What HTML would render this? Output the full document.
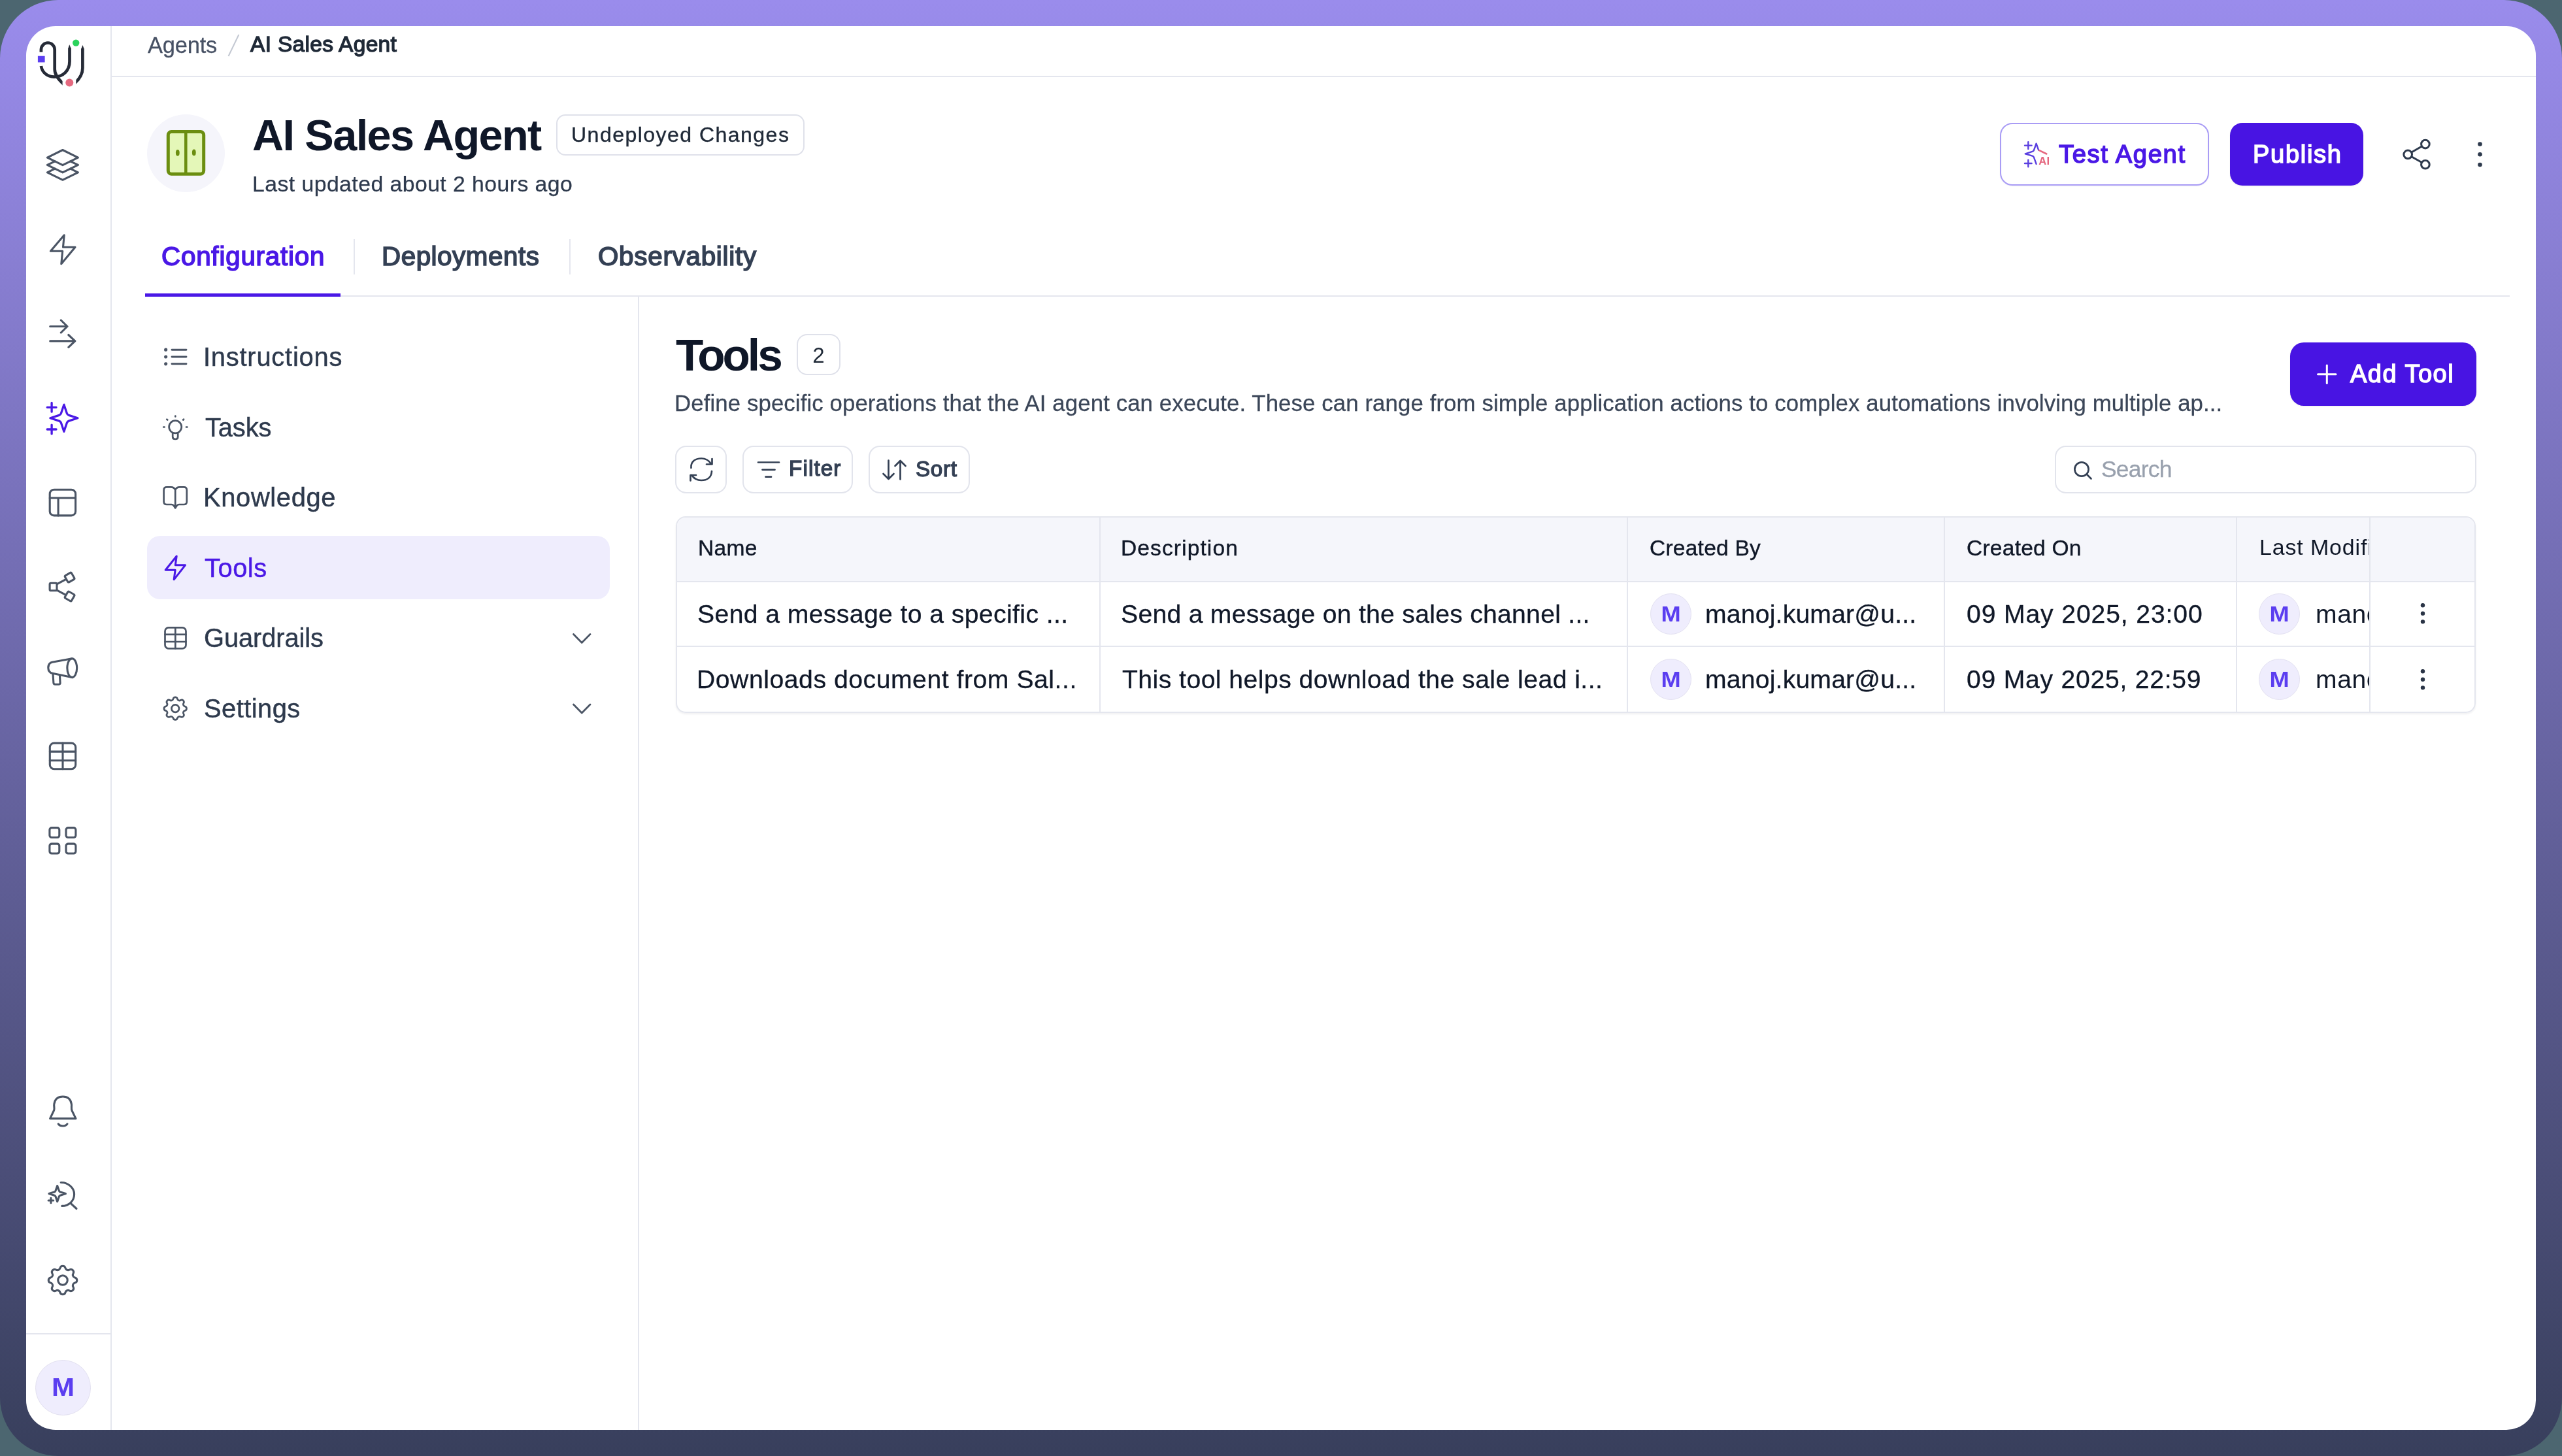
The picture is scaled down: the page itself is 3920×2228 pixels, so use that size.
<!DOCTYPE html>
<html><head><meta charset="utf-8">
<style>
*{box-sizing:border-box;margin:0;padding:0}
html,body{width:3920px;height:2228px;overflow:hidden;background:#4c6670;font-family:'Liberation Sans',sans-serif;-webkit-font-smoothing:antialiased}
.abs{position:absolute}
.t{position:absolute;white-space:nowrap;line-height:1;will-change:transform}
</style></head><body>
<div class="abs" style="left:0;top:0;width:3920px;height:2228px;border-radius:89px;background:linear-gradient(180deg,#9a8cec 0%,#383f5c 100%)"></div>
<div class="abs" style="left:40px;top:40px;width:3840px;height:2148px;border-radius:45px;background:#fff"></div>

<div class="abs" style="left:168.5px;top:40px;width:2px;height:2148px;background:#e4e6ee"></div>
<div class="abs" style="left:40px;top:2040px;width:129px;height:2px;background:#e4e6ee"></div>
<div class="abs" style="left:53.5px;top:2080.5px;width:85px;height:85px;border-radius:50%;background:#efedfd;border:1.5px solid #e2e0f0"></div>
<div class="abs" style="left:170px;top:115.5px;width:3710px;height:2px;background:#e4e6ee"></div>
<svg class="abs" style="left:340px;top:48px" width="40" height="44"><path d="M25.4,5 L9.5,38" stroke="#c3c8d2" stroke-width="2"/></svg>
<div class="abs" style="left:225px;top:174.5px;width:119px;height:119px;border-radius:50%;background:#f5f5fb"></div>
<div class="abs" style="left:851px;top:175px;width:380px;height:63px;border:2px solid #dfe1ea;border-radius:14px"></div>
<div class="abs" style="left:3060px;top:188px;width:320px;height:96px;border:2.5px solid #a99cf5;border-radius:19px;box-shadow:0 1px 2px rgba(16,24,40,.05)"></div>
<div class="abs" style="left:3412px;top:188px;width:204px;height:96px;background:#4814e3;border-radius:19px;box-shadow:0 1px 2px rgba(16,24,40,.08)"></div>
<div class="abs" style="left:541px;top:366px;width:2px;height:54px;background:#e4e6ee"></div>
<div class="abs" style="left:871px;top:366px;width:2px;height:54px;background:#e4e6ee"></div>
<div class="abs" style="left:222px;top:452px;width:3618px;height:2px;background:#e4e6ee"></div>
<div class="abs" style="left:222px;top:449px;width:299px;height:5px;background:#4a18e6"></div>
<div class="abs" style="left:976px;top:454px;width:2px;height:1734px;background:#e4e6ee"></div>
<div class="abs" style="left:224.5px;top:820px;width:708.5px;height:96.6px;background:#efedfd;border-radius:20px"></div>
<div class="abs" style="left:1219px;top:511px;width:67px;height:63px;border:2px solid #dfe1ea;border-radius:16px"></div>
<div class="abs" style="left:3504px;top:524px;width:284.5px;height:97px;background:#4814e3;border-radius:21px;box-shadow:0 1px 2px rgba(16,24,40,.08)"></div>
<div class="abs" style="left:1033px;top:682px;width:79px;height:73px;border:2px solid #e2e4ec;border-radius:17px"></div>
<div class="abs" style="left:1136px;top:682px;width:169px;height:73px;border:2px solid #e2e4ec;border-radius:17px"></div>
<div class="abs" style="left:1329px;top:682px;width:155px;height:73px;border:2px solid #e2e4ec;border-radius:17px"></div>
<div class="abs" style="left:3144px;top:682px;width:644.5px;height:73px;border:2px solid #e2e4ec;border-radius:17px"></div>
<div class="abs" style="left:1034px;top:789.5px;width:2754px;height:301px;border:2px solid #e4e6ee;border-radius:15px;overflow:hidden;box-shadow:0 2px 3px rgba(16,24,40,.06)">
<div class="abs" style="left:0;top:0;width:2750px;height:97.5px;background:#f5f6fb"></div>
<div class="abs" style="left:0;top:97px;width:2750px;height:2px;background:#e4e6ee"></div>
<div class="abs" style="left:0;top:196.5px;width:2750px;height:2px;background:#e4e6ee"></div>
<div class="abs" style="left:645.5px;top:0;width:2px;height:301px;background:#e4e6ee"></div>
<div class="abs" style="left:1453.0px;top:0;width:2px;height:301px;background:#e4e6ee"></div>
<div class="abs" style="left:1938.0px;top:0;width:2px;height:301px;background:#e4e6ee"></div>
<div class="abs" style="left:2384.5px;top:0;width:2px;height:301px;background:#e4e6ee"></div>
<div class="abs" style="left:2588.5px;top:0;width:2px;height:301px;background:#e4e6ee"></div>
</div>
<div class="abs" style="left:2525.0px;top:908.0px;width:63px;height:63px;border-radius:50%;background:#efedfd;border:1.5px solid #e3e1f1"></div>
<div class="t" style="left:2525.0px;width:63px;text-align:center;top:922.8px;font-size:33px;font-weight:700;color:#5b3ef0;transform:scaleX(1.1)">M</div>
<div class="abs" style="left:2525.0px;top:1008.0px;width:63px;height:63px;border-radius:50%;background:#efedfd;border:1.5px solid #e3e1f1"></div>
<div class="t" style="left:2525.0px;width:63px;text-align:center;top:1022.8px;font-size:33px;font-weight:700;color:#5b3ef0;transform:scaleX(1.1)">M</div>
<div class="abs" style="left:3456.0px;top:908.0px;width:63px;height:63px;border-radius:50%;background:#efedfd;border:1.5px solid #e3e1f1"></div>
<div class="t" style="left:3456.0px;width:63px;text-align:center;top:922.8px;font-size:33px;font-weight:700;color:#5b3ef0;transform:scaleX(1.1)">M</div>
<div class="abs" style="left:3456.0px;top:1008.0px;width:63px;height:63px;border-radius:50%;background:#efedfd;border:1.5px solid #e3e1f1"></div>
<div class="t" style="left:3456.0px;width:63px;text-align:center;top:1022.8px;font-size:33px;font-weight:700;color:#5b3ef0;transform:scaleX(1.1)">M</div>
<div class="t" style="left:53.5px;width:85px;text-align:center;top:2103px;font-size:39px;font-weight:700;color:#5b3ef0;transform:scaleX(1.08)">M</div>
<div class="t" style="left:1219px;width:67px;text-align:center;top:527px;font-size:33px;color:#1f2937">2</div>
<div class="abs" style="left:3440px;top:800px;width:184.5px;height:275px;overflow:hidden">
<div class="t" style="left:16.8px;top:21.48px;font-size:33.9px;color:#101828;letter-spacing:0.9px">Last Modified By</div>
<div class="t" style="left:103px;top:119.77px;font-size:39.1px;color:#101828;letter-spacing:0.6px">manoj.kumar@u...</div>
<div class="t" style="left:103px;top:219.76px;font-size:39.1px;color:#101828;letter-spacing:0.6px">manoj.kumar@u...</div>
</div>
<div id="xbc1" class="t" style="left:226.00px;top:51.58px;font-size:34.49px;font-weight:400;-webkit-text-stroke:0.26px #475164;color:#475164;letter-spacing:-0.200px">Agents</div>
<div id="xbc2" class="t" style="left:383.00px;top:51.04px;font-size:33.48px;font-weight:400;-webkit-text-stroke:1.34px #1f2937;color:#1f2937;letter-spacing:0.331px">AI Sales Agent</div>
<div id="xtitle" class="t" style="left:386.00px;top:174.03px;font-size:66.67px;font-weight:700;color:#0f1728;letter-spacing:-1.615px">AI Sales Agent</div>
<div id="xbadge" class="t" style="left:874.00px;top:190.41px;font-size:32.10px;font-weight:400;-webkit-text-stroke:0.36px #1f2937;color:#1f2937;letter-spacing:1.435px">Undeployed Changes</div>
<div id="xupd" class="t" style="left:386.00px;top:265.00px;font-size:33.77px;font-weight:400;-webkit-text-stroke:0.25px #2e3a4d;color:#2e3a4d;letter-spacing:0.448px">Last updated about 2 hours ago</div>
<div id="xtestag" class="t" style="left:3150.00px;top:216.90px;font-size:38.12px;font-weight:400;-webkit-text-stroke:1.52px #4a18e6;color:#4a18e6;letter-spacing:1.667px">Test Agent</div>
<div id="xpublish" class="t" style="left:3447.00px;top:216.90px;font-size:38.12px;font-weight:400;-webkit-text-stroke:1.52px #ffffff;color:#ffffff;letter-spacing:1.667px">Publish</div>
<div id="xtab1" class="t" style="left:247.00px;top:372.60px;font-size:40.29px;font-weight:400;-webkit-text-stroke:1.61px #4a18e6;color:#4a18e6;letter-spacing:0.825px">Configuration</div>
<div id="xtab2" class="t" style="left:584.00px;top:372.60px;font-size:40.29px;font-weight:400;-webkit-text-stroke:1.61px #344054;color:#344054;letter-spacing:0.570px">Deployments</div>
<div id="xtab3" class="t" style="left:915.00px;top:372.60px;font-size:40.29px;font-weight:400;-webkit-text-stroke:1.61px #344054;color:#344054;letter-spacing:0.775px">Observability</div>
<div id="xnav1" class="t" style="left:311.00px;top:526.75px;font-size:39.86px;font-weight:400;-webkit-text-stroke:0.45px #2e3a4d;color:#2e3a4d;letter-spacing:0.773px">Instructions</div>
<div id="xnav2" class="t" style="left:314.00px;top:634.60px;font-size:39.86px;font-weight:400;-webkit-text-stroke:0.45px #2e3a4d;color:#2e3a4d;letter-spacing:-0.125px">Tasks</div>
<div id="xnav3" class="t" style="left:311.00px;top:741.75px;font-size:39.86px;font-weight:400;-webkit-text-stroke:0.45px #2e3a4d;color:#2e3a4d;letter-spacing:0.662px">Knowledge</div>
<div id="xnav4" class="t" style="left:313.00px;top:849.60px;font-size:39.86px;font-weight:400;-webkit-text-stroke:0.45px #4a18e6;color:#4a18e6;letter-spacing:0.525px">Tools</div>
<div id="xnav5" class="t" style="left:312.00px;top:956.75px;font-size:39.86px;font-weight:400;-webkit-text-stroke:0.45px #2e3a4d;color:#2e3a4d;letter-spacing:-0.111px">Guardrails</div>
<div id="xnav6" class="t" style="left:312.00px;top:1064.60px;font-size:39.86px;font-weight:400;-webkit-text-stroke:0.45px #2e3a4d;color:#2e3a4d;letter-spacing:0.457px">Settings</div>
<div id="xh2" class="t" style="left:1034.00px;top:509.22px;font-size:69.28px;font-weight:700;color:#0f1728;letter-spacing:-3.975px">Tools</div>
<div id="xdesc" class="t" style="left:1032.00px;top:600.48px;font-size:34.78px;font-weight:400;-webkit-text-stroke:0.26px #3b4658;color:#3b4658;letter-spacing:0.112px">Define specific operations that the AI agent can execute. These can range from simple application actions to complex automations involving multiple ap...</div>
<div id="xaddtool" class="t" style="left:3596.00px;top:554.32px;font-size:37.97px;font-weight:400;-webkit-text-stroke:1.52px #ffffff;color:#ffffff;letter-spacing:1.500px">Add Tool</div>
<div id="xfilter" class="t" style="left:1207.00px;top:700.09px;font-size:33.19px;font-weight:400;-webkit-text-stroke:1.33px #344054;color:#344054;letter-spacing:1.140px">Filter</div>
<div id="xsort" class="t" style="left:1401.00px;top:700.79px;font-size:33.19px;font-weight:400;-webkit-text-stroke:1.33px #344054;color:#344054;letter-spacing:0.700px">Sort</div>
<div id="xsearch" class="t" style="left:3215.00px;top:700.52px;font-size:35.51px;font-weight:400;-webkit-text-stroke:0.27px #98a0ad;color:#98a0ad;letter-spacing:-0.820px">Search</div>
<div id="xth1" class="t" style="left:1068.00px;top:822.13px;font-size:33.55px;font-weight:400;-webkit-text-stroke:0.38px #101828;color:#101828;letter-spacing:0.300px">Name</div>
<div id="xth2" class="t" style="left:1715.00px;top:822.13px;font-size:33.55px;font-weight:400;-webkit-text-stroke:0.38px #101828;color:#101828;letter-spacing:1.100px">Description</div>
<div id="xth3" class="t" style="left:2524.00px;top:822.13px;font-size:33.55px;font-weight:400;-webkit-text-stroke:0.38px #101828;color:#101828;letter-spacing:0.222px">Created By</div>
<div id="xth4" class="t" style="left:3009.00px;top:822.13px;font-size:33.55px;font-weight:400;-webkit-text-stroke:0.38px #101828;color:#101828;letter-spacing:0.233px">Created On</div>
<div id="xr1c1" class="t" style="left:1067.00px;top:919.74px;font-size:39.13px;font-weight:400;-webkit-text-stroke:0.29px #101828;color:#101828;letter-spacing:0.403px">Send a message to a specific ...</div>
<div id="xr2c1" class="t" style="left:1066.00px;top:1019.74px;font-size:39.13px;font-weight:400;-webkit-text-stroke:0.29px #101828;color:#101828;letter-spacing:0.548px">Downloads document from Sal...</div>
<div id="xr1c2" class="t" style="left:1715.00px;top:919.74px;font-size:39.13px;font-weight:400;-webkit-text-stroke:0.29px #101828;color:#101828;letter-spacing:0.279px">Send a message on the sales channel ...</div>
<div id="xr2c2" class="t" style="left:1717.00px;top:1019.74px;font-size:39.13px;font-weight:400;-webkit-text-stroke:0.29px #101828;color:#101828;letter-spacing:0.460px">This tool helps download the sale lead i...</div>
<div id="xr1c3" class="t" style="left:2609.00px;top:919.74px;font-size:39.13px;font-weight:400;-webkit-text-stroke:0.29px #101828;color:#101828;letter-spacing:0.200px">manoj.kumar@u...</div>
<div id="xr2c3" class="t" style="left:2609.00px;top:1019.74px;font-size:39.13px;font-weight:400;-webkit-text-stroke:0.29px #101828;color:#101828;letter-spacing:0.200px">manoj.kumar@u...</div>
<div id="xr1c4" class="t" style="left:3009.00px;top:919.74px;font-size:39.13px;font-weight:400;-webkit-text-stroke:0.29px #101828;color:#101828;letter-spacing:0.871px">09 May 2025, 23:00</div>
<div id="xr2c4" class="t" style="left:3009.00px;top:1019.74px;font-size:39.13px;font-weight:400;-webkit-text-stroke:0.29px #101828;color:#101828;letter-spacing:0.747px">09 May 2025, 22:59</div>
<svg class="abs" style="left:0;top:0" width="3920" height="2228" viewBox="0 0 3920 2228">
<defs><clipPath id="lgA"><rect x="40" y="40" width="55.6" height="100"/></clipPath><clipPath id="lgJ"><rect x="116.3" y="40" width="30" height="100"/></clipPath></defs>
<g fill="none" stroke="#262b37" stroke-width="4.7" stroke-linecap="butt"><path clip-path="url(#lgA)" d="M62.9,79.7 V75.9 A10.4,10.4 0 0 1 83.7,75.9 V106 C83.7,114 88,120.5 98,129.5"/><path d="M62.9,101 C64.5,111 72.5,117.6 82.8,117.6 C96.5,117.6 106.5,108 106.5,94 V74"/><path clip-path="url(#lgJ)" d="M126.4,74.5 V104 C126.4,113 122,121 113,128.5"/></g>
<path d="M104.15,74.6 L106.2,68.3 L108.85,74.6 Z M124.05,75.2 L126.5,69.1 L128.75,75.2 Z" fill="#262b37"/>
<circle cx="116.2" cy="65.6" r="5.2" fill="#2bd35c"/>
<rect x="57.9" y="85.7" width="10.7" height="9.7" fill="#5b3ef0"/>
<circle cx="106.3" cy="126.4" r="6" fill="#e5697f"/>
<g fill="none" stroke="#4b5565" stroke-width="3.1" stroke-linecap="round" stroke-linejoin="round">
<path d="M95.9,229.5 L119.4,241.1 L95.9,252.6 L72.4,241.1 Z"/>
<path d="M84.15,246.85 L72.4,252.45 L95.9,263.95 L119.4,252.45 L107.65,246.85"/>
<path d="M84.15,258.20 L72.4,263.80 L95.9,275.30 L119.4,263.80 L107.65,258.20"/>
<path d="M98.2,359.8 L77.4,384.2 H95.7 L93.8,403.8 L115,378.2 H96.5 Z"/>
<path d="M76.7,499.5 H103 M93.3,490 L103,499.5 L93.3,509 M76.7,521.9 H114.8 M104.8,512.5 L114.8,521.9 L104.8,531.3"/>
</g>
<g fill="none" stroke="#4a18e6" stroke-width="3.3" stroke-linecap="round" stroke-linejoin="round">
<path d="M97.90,619.28 L93.44,632.53 Q92.70,634.72 90.46,635.44 L76.90,639.80 L90.46,644.16 Q92.70,644.88 93.44,647.07 L97.90,660.32 L102.36,647.07 Q103.10,644.88 105.34,644.16 L118.90,639.80 L105.34,635.44 Q103.10,634.72 102.36,632.53 Z"/>
<path d="M72.20,623.30H86.00M79.10,616.40V630.20 M72.20,657.00H86.00M79.10,650.10V663.90"/>
</g>
<g fill="none" stroke="#4b5565" stroke-width="3.1" stroke-linecap="round" stroke-linejoin="round">
<rect x="76.2" y="749.3" width="39.4" height="39.6" rx="6.5"/><path d="M76.2,762 H115.6 M89.1,762 V788.9"/>
<rect x="76.1" y="892.2" width="10.9" height="11.6" rx="1.8"/>
<rect x="100.8" y="877.8" width="11.6" height="11.6" rx="1.8" transform="rotate(-30 106.6 883.6)"/>
<rect x="100.8" y="906.7" width="11.6" height="11.6" rx="1.8" transform="rotate(30 106.6 912.5)"/>
<path d="M87.5,893.6 L100.6,886.6 M87.5,903.4 L100.6,910.4"/>
<path d="M110.2,1007.8 L80,1013.3 C75.2,1014.3 73.8,1018 73.8,1021.8 C73.8,1025.6 75.2,1029.3 80,1030.3 L110.2,1036.6"/><ellipse cx="110.25" cy="1022.2" rx="7.4" ry="14.4"/><path d="M81,1031 L81.9,1045 C82,1046.5 83,1047.2 84.5,1047.2 H89.8 C91.3,1047.2 92.2,1046.5 92.1,1045 L91.4,1033.2"/>
<rect x="76.3" y="1137.1" width="39.4" height="39.7" rx="6.5"/><path d="M76.3,1150.1 H115.7 M76.3,1163.8 H115.7 M96,1137.1 V1176.8"/>
<rect x="75.9" y="1266.6" width="14.9" height="14.9" rx="3.2"/>
<rect x="101" y="1266.6" width="14.9" height="14.9" rx="3.2"/>
<rect x="75.9" y="1291.1" width="14.9" height="14.9" rx="3.2"/>
<rect x="101" y="1291.1" width="14.9" height="14.9" rx="3.2"/>
<path d="M76.6,1711.6 L82.6,1699 C83.8,1696.5 82.2,1692 82.8,1689.5 C84,1681.5 89,1678 96.2,1678 C103.5,1678 108.2,1682 109.4,1689.5 C110,1693 108.5,1696.5 110.3,1700 L116,1711.6 Z"/><path d="M89.2,1719.8 C92,1724 100.5,1724 103,1719.8"/>
<path d="M93.2,1809.5 C104,1809 113.6,1817.8 113.6,1827.4 C113.6,1837.7 105,1845.4 94.8,1845.4 M107.9,1841.1 L117,1849.5"/>
<path d="M87.70,1814.54 L84.98,1822.33 Q84.54,1823.61 83.17,1824.04 L74.92,1826.60 L83.17,1829.16 Q84.54,1829.59 84.98,1830.87 L87.70,1838.66 L90.42,1830.87 Q90.86,1829.59 92.23,1829.16 L100.48,1826.60 L92.23,1824.04 Q90.86,1823.61 90.42,1822.33 Z M74.10,1837.00H81.70M77.90,1833.20V1840.80"/>
</g>
<g transform="translate(67.00,1930.00) scale(2.4167)" fill="none" stroke="#4b5565" stroke-width="1.283" stroke-linecap="round" stroke-linejoin="round"><path d="M10.325 4.317c.426 -1.756 2.924 -1.756 3.35 0a1.724 1.724 0 0 0 2.573 1.066c1.543 -.94 3.31 .826 2.37 2.37a1.724 1.724 0 0 0 1.065 2.572c1.756 .426 1.756 2.924 0 3.35a1.724 1.724 0 0 0 -1.066 2.573c.94 1.543 -.826 3.31 -2.37 2.37a1.724 1.724 0 0 0 -2.572 1.065c-.426 1.756 -2.924 1.756 -3.35 0a1.724 1.724 0 0 0 -2.573 -1.066c-1.543 .94 -3.31 -.826 -2.37 -2.37a1.724 1.724 0 0 0 -1.065 -2.572c-1.756 -.426 -1.756 -2.924 0 -3.35a1.724 1.724 0 0 0 1.066 -2.573c-.94 -1.543 .826 -3.31 2.37 -2.37c1 .608 2.296 .07 2.572 -1.065z"/><circle cx="12" cy="12" r="3"/></g>
<rect x="257.3" y="201.5" width="54.4" height="64.7" rx="5" fill="#e4f7b8" stroke="#6b8e10" stroke-width="5"/>
<path d="M284.3,201.5 V266.2" stroke="#6b8e10" stroke-width="4.5"/>
<ellipse cx="271.8" cy="233.8" rx="2.9" ry="4.9" fill="#6b8e10"/><ellipse cx="296.8" cy="233.4" rx="2.9" ry="4.9" fill="#6b8e10"/>
<g fill="none" stroke="#5a3fe0" stroke-width="2.4" stroke-linecap="round" stroke-linejoin="round"><path d="M3119.18,229.75 Q3118.78,228.86 3115.60,219.64 L3112.02,229.75 Q3111.43,231.42 3109.64,231.97 L3098.77,235.30 L3109.64,238.63 Q3111.43,239.18 3112.02,240.85 L3115.60,250.96"/><path d="M3098.00,222.60H3108.60M3103.30,217.30V227.90 M3098.00,250.00H3108.60M3103.30,244.70V255.30"/></g>
<path d="M3120.2,230.2 L3131.3,235.5" stroke="#e5677f" stroke-width="2.6" stroke-linecap="round"/>
<text x="3119.2" y="251.8" font-family="Liberation Sans" font-weight="700" font-size="16.5" fill="#e5677f" letter-spacing="0.3">AI</text>
<g fill="none" stroke="#2e3a4d" stroke-width="3"><circle cx="3710.9" cy="220.6" r="6.3"/><circle cx="3684.2" cy="236.4" r="6.3"/><circle cx="3710.9" cy="251.8" r="6.3"/><path d="M3689.8,233 L3705.4,224 M3689.8,239.8 L3705.4,248.5"/></g>
<g fill="#2e3a4d"><circle cx="3794.5" cy="220.5" r="3.3"/><circle cx="3794.5" cy="236.2" r="3.3"/><circle cx="3794.5" cy="252" r="3.3"/></g>
<g fill="none" stroke="#4b5565" stroke-width="2.9" stroke-linecap="round" stroke-linejoin="round">
<path d="M263,535.2 H285 M263,546 H285 M263,556.8 H285"/>
</g>
<g fill="#4b5565"><circle cx="253.7" cy="535.2" r="2.6"/><circle cx="253.7" cy="546" r="2.6"/><circle cx="253.7" cy="556.8" r="2.6"/></g>
<g fill="none" stroke="#4b5565" stroke-width="2.7" stroke-linecap="round" stroke-linejoin="round">
<circle cx="268.2" cy="653.3" r="9.6"/><path d="M264.2,662.5 V668.5 C264.2,671 265.5,672 268.2,672 C271,672 272.2,671 272.2,668.5 V662.5"/>
<path d="M268.3,636.5 V637.5 M255.3,641.6 L256.2,642.5 M281,641.6 L280.2,642.5 M250.2,653.5 H251.6 M285,653.5 H286.4"/>
<path d="M268.2,749.8 C267,746.6 264.5,745.3 261.5,745.3 H255.2 C252.3,745.3 250.6,747 250.6,749.9 V767.4 C250.6,770.3 252.3,772 255.2,772 H262.3 C263.8,772 264.9,772.6 265.7,773.6 L268.2,777.4 L270.7,773.6 C271.5,772.6 272.6,772 274.1,772 H281.2 C284.1,772 285.8,770.3 285.8,767.4 V749.9 C285.8,747 284.1,745.3 281.2,745.3 H274.9 C271.9,745.3 269.4,746.6 268.2,749.8 Z M268.2,749.8 V776"/>
</g>
<g fill="none" stroke="#4a18e6" stroke-width="3" stroke-linecap="round" stroke-linejoin="round"><path d="M270.2,851 L253.2,872.2 H268.1 L266.2,886.8 L283.4,864.8 H268.3 Z"/></g>
<g fill="none" stroke="#4b5565" stroke-width="2.7" stroke-linecap="round" stroke-linejoin="round">
<rect x="252.5" y="960.4" width="32" height="32" rx="5.5"/><path d="M252.5,970.8 H284.5 M252.5,982 H284.5 M268.3,960.4 V992.4"/>
<path d="M877.5,970.5 L890.2,983.5 L903,970.5 M877.5,1078 L890.2,1091 L903,1078"/>
</g>
<g transform="translate(245.20,1061.20) scale(1.9167)" fill="none" stroke="#4b5565" stroke-width="1.409" stroke-linecap="round" stroke-linejoin="round"><path d="M10.325 4.317c.426 -1.756 2.924 -1.756 3.35 0a1.724 1.724 0 0 0 2.573 1.066c1.543 -.94 3.31 .826 2.37 2.37a1.724 1.724 0 0 0 1.065 2.572c1.756 .426 1.756 2.924 0 3.35a1.724 1.724 0 0 0 -1.066 2.573c.94 1.543 -.826 3.31 -2.37 2.37a1.724 1.724 0 0 0 -2.572 1.065c-.426 1.756 -2.924 1.756 -3.35 0a1.724 1.724 0 0 0 -2.573 -1.066c-1.543 .94 -3.31 -.826 -2.37 -2.37a1.724 1.724 0 0 0 -1.065 -2.572c-1.756 -.426 -1.756 -2.924 0 -3.35a1.724 1.724 0 0 0 1.066 -2.573c-.94 -1.543 .826 -3.31 2.37 -2.37c1 .608 2.296 .07 2.572 -1.065z"/><circle cx="12" cy="12" r="3"/></g>
<g fill="none" stroke="#344054" stroke-width="2.7" stroke-linecap="round" stroke-linejoin="round">
<path d="M1057.5,716 C1056.5,706 1064,701.5 1073.2,701.5 C1079.5,701.5 1084.5,704.5 1087.8,709.5 M1089.5,702 V710.5 H1081 M1089,721 C1088.5,731 1081.5,735 1073,735 C1066.5,735 1061.5,732 1058.3,727 M1056.5,735.5 V727 H1065"/>
<path d="M1160,707.5 H1192 M1166.5,718.8 H1185.5 M1171.5,729.7 H1180"/>
<path d="M1359.5,704.5 V733 M1351.5,725 L1359.5,733 L1367.5,725 M1377.5,733.5 V705 M1369.5,713 L1377.5,705 L1385.5,713"/>
<circle cx="3185" cy="718" r="10.6"/><path d="M3193,726 L3199.5,732.5"/>
</g>
<path d="M3546.5,572.8 H3574 M3560.3,559 V586.5" stroke="#fff" stroke-width="3" stroke-linecap="round"/>
<g fill="#2a3446">
<circle cx="3707" cy="926.25" r="3.2"/>
<circle cx="3707" cy="938.8" r="3.2"/>
<circle cx="3707" cy="951.3499999999999" r="3.2"/>
<circle cx="3707" cy="1027.25" r="3.2"/>
<circle cx="3707" cy="1039.8" r="3.2"/>
<circle cx="3707" cy="1052.35" r="3.2"/>
</g>
</svg>
</body></html>
